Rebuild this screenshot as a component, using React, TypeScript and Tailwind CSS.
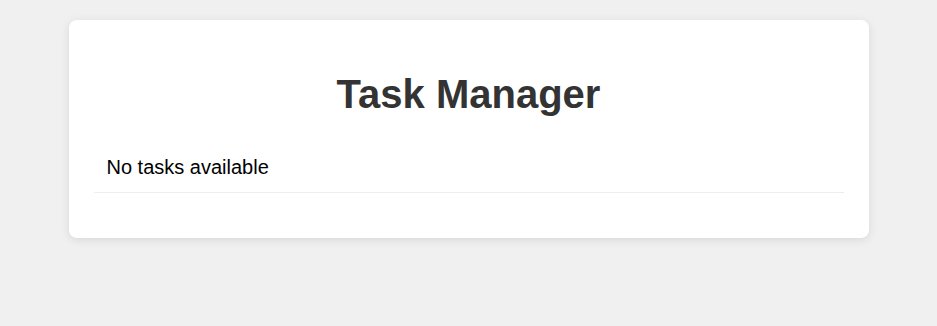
export default function App() {
  return (
    <div className="min-h-screen bg-[#f0f0f0] px-[20px] pt-[20px] font-['Liberation_Sans',Arial,sans-serif]">
      <div className="mx-auto max-w-[800px] rounded-lg bg-white p-[25px] shadow-[0_2px_10px_rgba(0,0,0,0.1)]">
        <h1 className="mt-[27px] mb-[25px] text-center text-[40px] font-bold leading-[normal] text-[#333]">
          Task Manager
        </h1>
        <ul className="mb-[20px]">
          <li className="border-b border-[#eee] pt-[14px] pb-[13px] pl-[13px] pr-3 text-[20px] leading-[normal] text-black">
            No tasks available
          </li>
        </ul>
      </div>
    </div>
  );
}
